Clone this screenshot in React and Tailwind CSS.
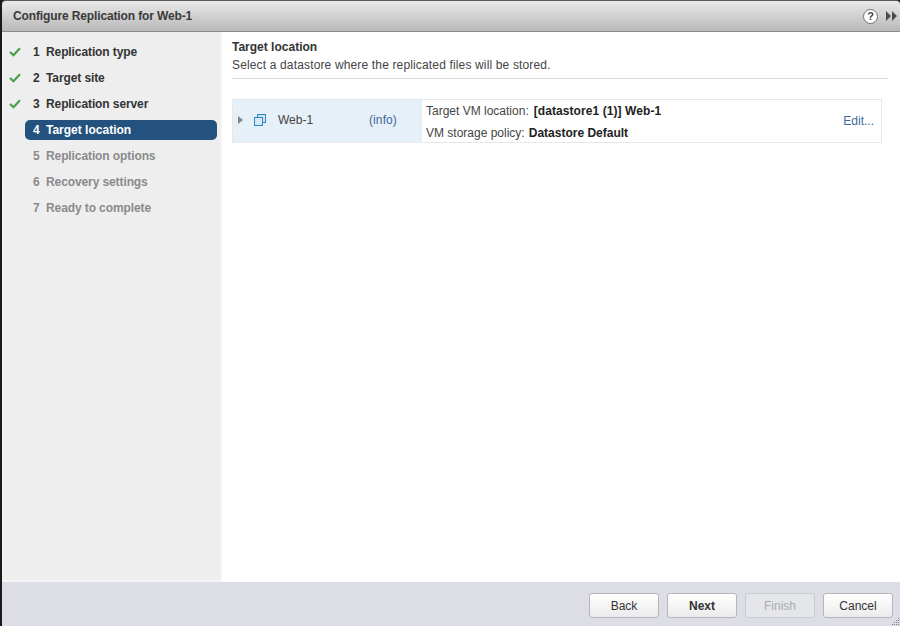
import React from 'react';

const steps = [
  { n: 1, label: 'Replication type', done: true },
  { n: 2, label: 'Target site', done: true },
  { n: 3, label: 'Replication server', done: true },
  { n: 4, label: 'Target location', active: true },
  { n: 5, label: 'Replication options' },
  { n: 6, label: 'Recovery settings' },
  { n: 7, label: 'Ready to complete' },
];

const Check = () => (
  <svg width="12" height="10" viewBox="0 0 13 11" className="absolute left-[7px] top-[8px]">
    <path d="M1 5.5 L4.8 9 L12 1.5" fill="none" stroke="#4aa04a" strokeWidth="2.4" />
  </svg>
);

const Step = ({ step }) => {
  if (step.active) {
    return (
      <div className="h-[26px] flex items-center">
        <div className="ml-[23px] w-[192px] h-5 rounded-[5px] bg-[#23527f] text-white flex items-center pl-2 font-bold">
          <span className="w-[13px]">{step.n}</span>
          <span>{step.label}</span>
        </div>
      </div>
    );
  }
  return (
    <div className={`relative h-[26px] flex items-center pl-[31px] font-bold tracking-[-0.1px] ${step.done ? 'text-[#333333]' : 'text-[#8a8a8a]'}`}>
      {step.done && <Check />}
      <span className="w-[13px]">{step.n}</span>
      <span>{step.label}</span>
    </div>
  );
};

const Button = ({ children, bold, disabled }) => (
  <button
    className={`w-[70px] h-[25px] rounded-[3px] border text-[12px] ${bold ? 'font-bold' : ''} ${
      disabled
        ? 'border-[#c9ccd2] bg-[#e4e6ea] text-[#a9abb0]'
        : 'border-[#b4b6bb] bg-gradient-to-b from-white to-[#ebebed] text-[#333333]'
    }`}
  >
    {children}
  </button>
);

// dots of the resize grip, bottom right corner
const gripDots = [
  [7, 1], [5, 3], [7, 3], [3, 5], [5, 5], [7, 5], [1, 7], [3, 7], [5, 7], [7, 7],
];

export default function App() {
  return (
    <div className="w-[900px] h-[626px] flex flex-col overflow-hidden bg-[#1a1a1a] pl-[2px] text-[12px] font-['Liberation_Sans',Arial,sans-serif] text-[#333333]">
      {/* Title bar */}
      <div className="h-[32px] shrink-0 flex items-center justify-between pl-[11px] pr-[3px] rounded-t-[4px] bg-gradient-to-b from-[#e9e9e9] to-[#b9b9b9] border-t border-b border-t-[#5a5a5a] border-b-[#8c8c8c]">
        <span className="font-bold text-[#3a3a3a] tracking-[-0.13px]">Configure Replication for Web-1</span>
        <div className="flex items-center gap-2">
          <span className="w-[15px] h-[15px] rounded-full bg-white border border-[#6e6e6e] flex items-center justify-center text-[11px] font-bold text-[#444444]">?</span>
          <svg width="11" height="10" viewBox="0 0 11 10">
            <path d="M0 0 L5 5 L0 10 Z M6 0 L11 5 L6 10 Z" fill="#4d4d4d" />
          </svg>
        </div>
      </div>

      <div className="flex-1 flex min-h-0 bg-white">
        {/* Steps */}
        <div className="w-[220px] shrink-0 bg-[#eeeeee] border-r-2 border-b-2 border-[#f4f4f4] pt-[7px]">
          {steps.map(step => (
            <Step key={step.n} step={step} />
          ))}
        </div>

        {/* Page */}
        <div className="flex-1 pl-[10px] pr-[12px] pt-2">
          <div className="font-bold leading-[14px]">Target location</div>
          <div className="mt-1 leading-[14px] text-[#444444] tracking-[0.15px]">Select a datastore where the replicated files will be stored.</div>
          <div className="mt-[6px] border-t border-[#d8d8dc]" />

          <div className="mt-5 mr-[6px] h-[44px] flex border border-[#e6e8ec]">
            <div className="w-[189px] shrink-0 bg-[#e6f0f8] flex items-center pb-[2px]">
              <svg width="5" height="8" viewBox="0 0 5 8" className="ml-[5px]">
                <path d="M0 0 L5 4 L0 8 Z" fill="#7d8790" />
              </svg>
              <svg width="12" height="12" viewBox="0 0 12 12" className="ml-[11px]">
                <rect x="3.5" y="0.5" width="8" height="8" fill="#cfe4f5" stroke="#2f86c5" />
                <rect x="0.5" y="3.5" width="8" height="8" fill="#d9eaf7" stroke="#2f86c5" />
              </svg>
              <span className="ml-[12px] w-[91px] text-[#444444]">Web-1</span>
              <span className="text-[#3d6a9a] tracking-[0.1px]">(info)</span>
            </div>
            <div className="flex-1 relative pl-1 pt-1">
              <div className="leading-[14px] flex">
                <span className="text-[#444444]">Target VM location:</span>
                <span className="ml-[5px] font-bold text-[#222222] tracking-[0.08px]">[datastore1 (1)] Web-1</span>
              </div>
              <div className="mt-2 leading-[14px] flex">
                <span className="text-[#444444]">VM storage policy:</span>
                <span className="ml-1 font-bold text-[#222222]">Datastore Default</span>
              </div>
              <span className="absolute right-[7px] top-[12px] text-[#3d6a9a]">Edit...</span>
            </div>
          </div>
        </div>
      </div>

      {/* Footer */}
      <div className="relative h-[44px] shrink-0 bg-[#dddde5] flex items-center justify-end gap-2 pr-[7px] pt-[3px]">
        <Button>Back</Button>
        <Button bold>Next</Button>
        <Button disabled>Finish</Button>
        <Button>Cancel</Button>
        <svg width="9" height="9" viewBox="0 0 9 9" className="absolute right-0 bottom-0">
          {gripDots.map(([x, y]) => (
            <rect key={`${x}-${y}`} x={x} y={y} width="1" height="1" fill="#7f8088" />
          ))}
        </svg>
      </div>
    </div>
  );
}
